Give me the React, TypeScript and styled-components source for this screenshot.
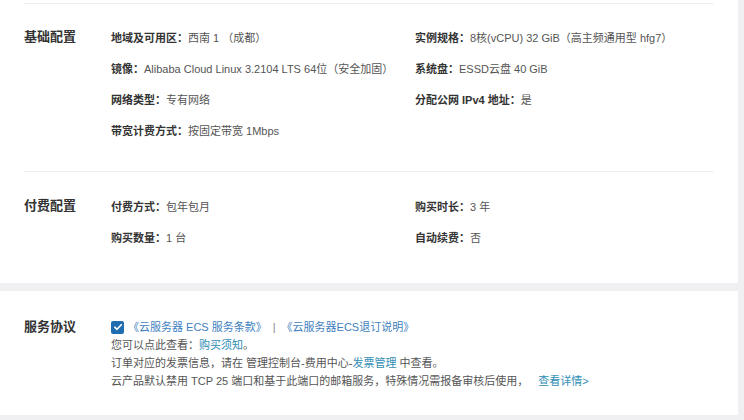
import React from "react";
import styled, { createGlobalStyle } from "styled-components";

const GlobalStyle = createGlobalStyle`
  html, body {
    margin: 0;
    padding: 0;
    background: #f0f0f2;
  }
  body {
    font-family: "Liberation Sans", "Noto Sans CJK SC", sans-serif;
    -webkit-font-smoothing: antialiased;
  }
`;

const Page = styled.div`
  width: 738px;
  display: flex;
  flex-direction: column;
`;

const Card = styled.div<{ $top?: number; $pt?: number }>`
  background: #ffffff;
  padding: ${(p) => p.$pt ?? 0}px 24px 0;
  margin-top: ${(p) => p.$top ?? 0}px;
`;

const Section = styled.section<{ $pt: number; $pb: number; $divider?: boolean }>`
  display: flex;
  align-items: flex-start;
  padding: ${(p) => p.$pt}px 0 ${(p) => p.$pb}px;
  border-top: ${(p) => (p.$divider ? "1px solid #efeff1" : "none")};
`;

const SectionTitle = styled.h3<{ $lh: number }>`
  width: 87px;
  flex: none;
  margin: 0;
  font-size: 13px;
  font-weight: 700;
  color: #333;
  line-height: ${(p) => p.$lh}px;
`;

const InfoGrid = styled.div`
  flex: 1;
  display: grid;
  grid-template-columns: 304px 1fr;
  grid-auto-rows: 31px;
  align-items: center;
`;

const Item = styled.div`
  font-size: 11px;
  color: #555;
  white-space: nowrap;
`;

const Label = styled.span`
  color: #333;
  font-weight: 700;
`;

const AgreementBody = styled.div`
  flex: 1;
  display: flex;
  flex-direction: column;
  font-size: 11px;
  color: #555;
  line-height: 18px;
`;

const CheckRow = styled.div`
  display: flex;
  align-items: center;
  gap: 2px;
`;

const CheckBox = styled.span`
  width: 13px;
  height: 13px;
  border-radius: 2px;
  background: #1f6db0;
  display: inline-flex;
  align-items: center;
  justify-content: center;
  margin-right: 2px;
`;

const Link = styled.a<{ $tone?: "blue" | "teal" }>`
  color: ${(p) => (p.$tone === "blue" ? "#3f7fc0" : "#2f8db5")};
  text-decoration: none;
`;

const Sep = styled.span`
  color: #888;
  margin: 0 4px;
`;

const Gap = styled.span`
  display: inline-block;
  width: 10px;
`;

type Row = { label: string; value: string };

const basic: Row[] = [
  { label: "地域及可用区：", value: "西南 1 （成都）" },
  { label: "实例规格：", value: "8核(vCPU) 32 GiB（高主频通用型 hfg7）" },
  { label: "镜像：", value: "Alibaba Cloud Linux 3.2104 LTS 64位（安全加固）" },
  { label: "系统盘：", value: "ESSD云盘 40 GiB" },
  { label: "网络类型：", value: "专有网络" },
  { label: "分配公网 IPv4 地址：", value: "是" },
  { label: "带宽计费方式：", value: "按固定带宽 1Mbps" },
];

const billing: Row[] = [
  { label: "付费方式：", value: "包年包月" },
  { label: "购买时长：", value: "3 年" },
  { label: "购买数量：", value: "1 台" },
  { label: "自动续费：", value: "否" },
];

const renderRows = (rows: Row[]) =>
  rows.map((r) => (
    <Item key={r.label}>
      <Label>{r.label}</Label>
      {r.value}
    </Item>
  ));

export default function App() {
  return (
    <>
      <GlobalStyle />
      <Page>
        <Card $pt={3}>
          <Section $pt={17} $pb={26} $divider>
            <SectionTitle $lh={31}>基础配置</SectionTitle>
            <InfoGrid>{renderRows(basic)}</InfoGrid>
          </Section>
          <Section $pt={18} $pb={31} $divider>
            <SectionTitle $lh={31}>付费配置</SectionTitle>
            <InfoGrid>{renderRows(billing)}</InfoGrid>
          </Section>
        </Card>

        <Card $top={8}>
          <Section $pt={27} $pb={25}>
            <SectionTitle $lh={18}>服务协议</SectionTitle>
            <AgreementBody>
              <CheckRow>
                <CheckBox>
                  <svg width="10" height="10" viewBox="0 0 10 10">
                    <path
                      d="M1.8 5.2 L4 7.3 L8.3 2.7"
                      fill="none"
                      stroke="#fff"
                      strokeWidth="1.6"
                      strokeLinecap="round"
                      strokeLinejoin="round"
                    />
                  </svg>
                </CheckBox>
                <Link $tone="blue">《云服务器 ECS 服务条款》</Link>
                <Sep>|</Sep>
                <Link $tone="blue">《云服务器ECS退订说明》</Link>
              </CheckRow>
              <div>
                您可以点此查看：<Link>购买须知</Link>。
              </div>
              <div>
                订单对应的发票信息，请在 管理控制台-费用中心-<Link>发票管理</Link> 中查看。
              </div>
              <div>
                云产品默认禁用 TCP 25 端口和基于此端口的邮箱服务，特殊情况需报备审核后使用，
                <Gap />
                <Link>查看详情&gt;</Link>
              </div>
            </AgreementBody>
          </Section>
        </Card>
      </Page>
    </>
  );
}
